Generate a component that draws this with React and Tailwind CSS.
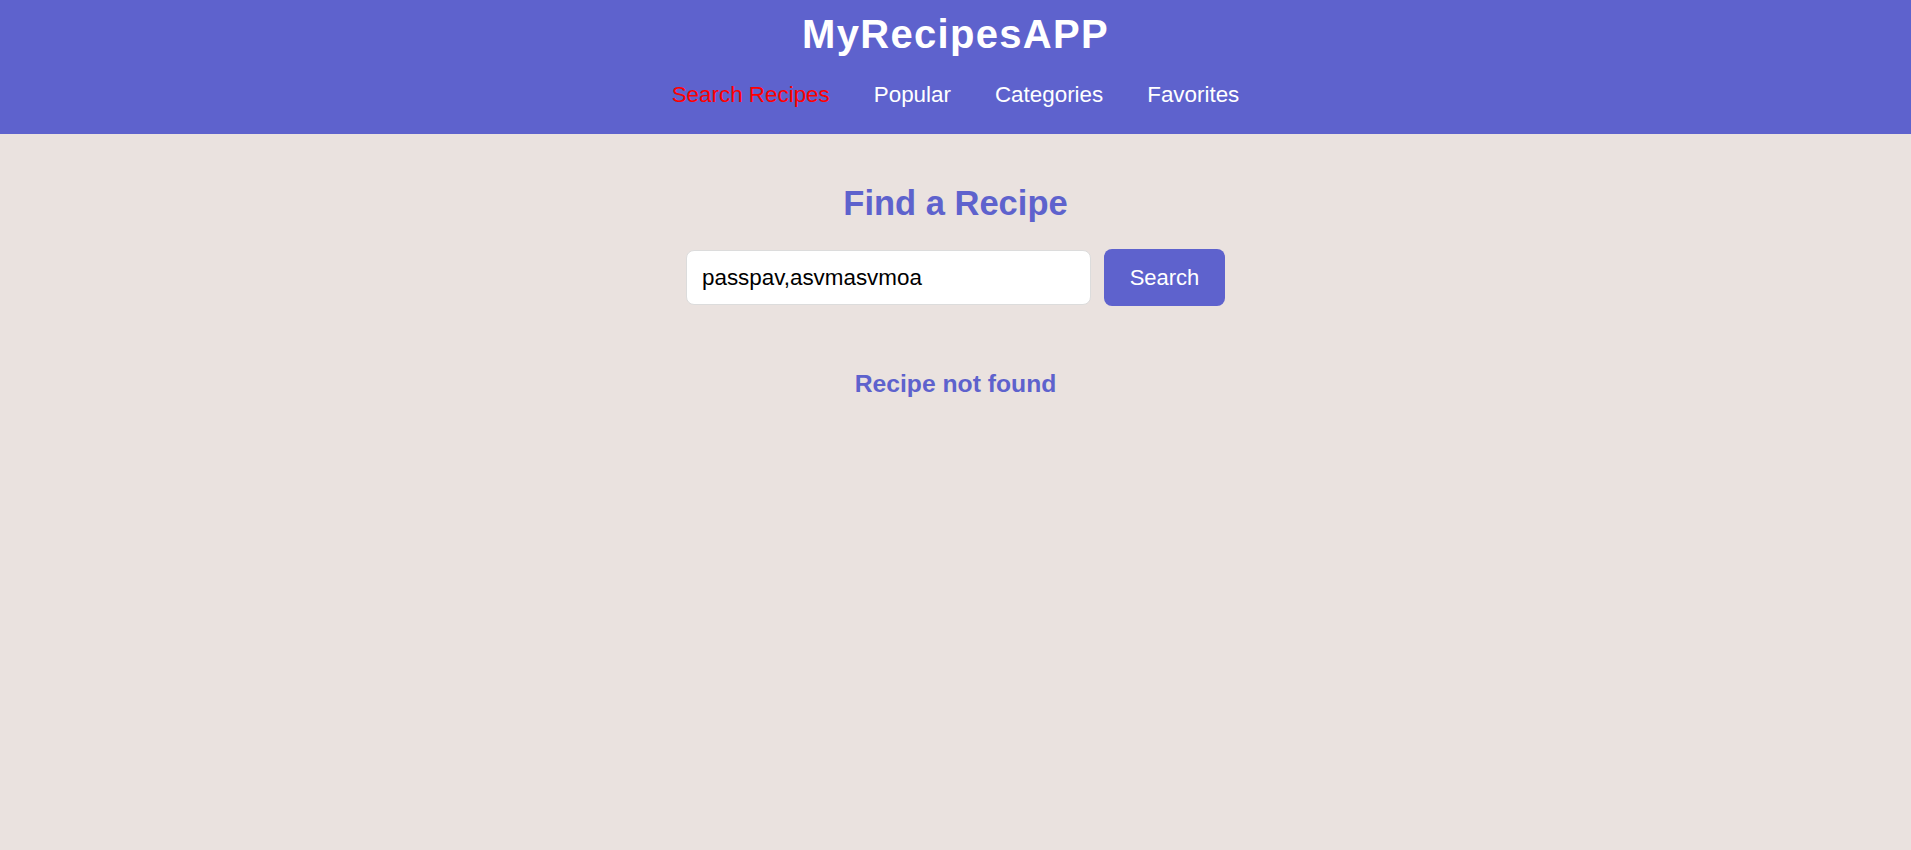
export default function App() {
  const links = ["Search Recipes", "Popular", "Categories", "Favorites"];
  return (
    <div className="min-h-screen bg-[#eae2df]" style={{ fontFamily: '"Liberation Sans", Arial, sans-serif' }}>
      <header className="bg-[#5e62cd] h-[134px] flex flex-col items-center pt-[11px]">
        <h1 className="text-white font-bold text-[40px] leading-[46px] tracking-[1.3px]">MyRecipesAPP</h1>
        <nav className="flex gap-[44px] mt-[25px]">
          {links.map((l, i) => (
            <a
              key={l}
              href="#"
              className={
                "text-[22.4px] leading-[26px] " + (i === 0 ? "text-[#ff0000]" : "text-white")
              }
            >
              {l}
            </a>
          ))}
        </nav>
      </header>
      <main className="flex flex-col items-center pt-[49px]">
        <h2 className="text-[#5e62cd] font-bold text-[34.5px] leading-[40px]">Find a Recipe</h2>
        <form className="flex gap-[13px] mt-[26px] items-center" onSubmit={(e) => e.preventDefault()}>
          <input
            type="text"
            defaultValue="passpav,asvmasvmoa"
            className="w-[405px] h-[55px] bg-white border border-[#dcdcdc] rounded-[8px] pl-[15px] text-[22.4px] text-black outline-none"
            style={{ fontFamily: '"Liberation Sans", Arial, sans-serif' }}
          />
          <button
            type="submit"
            className="w-[121px] h-[57px] bg-[#5e62cd] text-white rounded-[8px] text-[22px]"
            style={{ fontFamily: '"Liberation Sans", Arial, sans-serif' }}
          >
            Search
          </button>
        </form>
        <p className="text-[#5e62cd] font-bold text-[24.7px] leading-[28px] mt-[64px]">Recipe not found</p>
      </main>
    </div>
  );
}
